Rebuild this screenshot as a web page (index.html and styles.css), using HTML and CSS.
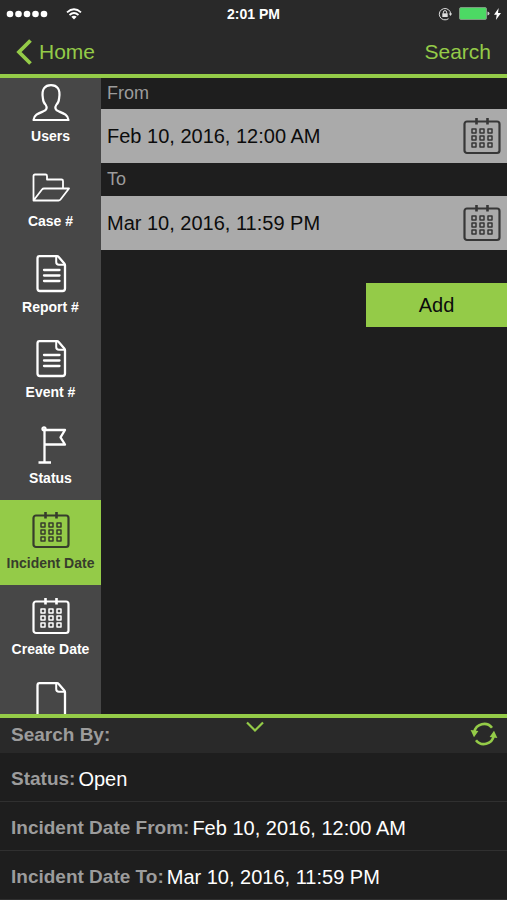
FILE: index.html
```html
<!DOCTYPE html>
<html lang="en">
<head>
<meta charset="utf-8">
<meta name="viewport" content="width=device-width, initial-scale=1">
<title>Search</title>
<link rel="stylesheet" href="styles.css">
</head>
<body>
<svg class="sprite" aria-hidden="true">
  <symbol id="calendar" viewBox="0 0 38 38">
    <rect x="1.500" y="4.500" width="35" height="31.500" rx="2.500" stroke-width="2.200"/>
    <path d="M13.500 1v6.500M24.500 1v6.500" stroke-width="2.600"/>
    <path d="M9 12h4v4h-4zM17 12h4v4h-4zM25 12h4v4h-4zM9 19h4v4h-4zM17 19h4v4h-4zM25 19h4v4h-4zM9 26h4v4h-4zM17 26h4v4h-4zM25 26h4v4h-4z" stroke-width="1.500"/>
  </symbol>
  <symbol id="page" viewBox="0 0 38 38">
    <path d="M7.500 1.200h17.500q1 0 1.700.8l5.600 6.500q.7.800.7 1.800v23.200q0 2.500-2.500 2.500h-22.500q-2.500 0-2.500-2.500v-30q0-2.300 2-2.300z" stroke-width="2.300"/>
    <path d="M24.200 1.500v5.500q0 2.800 2.800 2.800h5.500" stroke-width="2"/>
  </symbol>
  <symbol id="document" viewBox="0 0 38 38">
    <use href="#page"/>
    <path d="M12 15h15.500M12 20.500h15.500M12 26h15.500" stroke-width="2.300" stroke-linecap="round"/>
  </symbol>
</svg>

<header class="top">
  <div class="status">
    <div class="status-left">
      <svg width="42" height="8" viewBox="0 0 42 8" fill="#fff" aria-hidden="true"><circle cx="4" cy="4" r="3.300"/><circle cx="12.500" cy="4" r="3.300"/><circle cx="21" cy="4" r="3.300"/><circle cx="29.500" cy="4" r="3.300"/><circle cx="38" cy="4" r="3.300"/></svg>
      <svg width="16" height="12" viewBox="0 0 16 12" fill="none" stroke="#fff" stroke-width="1.800" aria-hidden="true"><path d="M1 4.300q7-6.200 14 0M3.500 7q4.500-4 9 0"/><path d="M8 11.500L5.300 8.800q2.700-2 5.400 0z" fill="#fff" stroke="none"/></svg>
    </div>
    <div class="time">2:01 PM</div>
    <div class="status-right">
      <svg width="14" height="14" viewBox="0 0 14 14" fill="none" stroke="#ddd" aria-hidden="true"><path d="M10.500 11.700A5.700 5.700 0 1 1 12.700 7"/><path d="M10.800 6.500h3.400l-1.700 2.500z" fill="#ddd" stroke="none"/><path d="M4.300 6.300h5.400v3.700h-5.400z" fill="#ddd" stroke="none"/><path d="M5.400 6.500v-1.300a1.600 1.600 0 0 1 3.200 0v1.300"/></svg>
      <svg class="battery" width="31" height="13" viewBox="0 0 31 13" aria-hidden="true"><rect x="0.500" y="0.500" width="27" height="12" rx="1.500" fill="#4cd964" stroke="#7d9a80"/><path d="M28.500 4.500q2 .5 2 2t-2 2z" fill="#ccc"/></svg>
      <svg width="7" height="12" viewBox="0 0 7 12" fill="#fff" aria-hidden="true"><path d="M4.700 0L0 6.700h2.700L1.900 12 7 5H4z"/></svg>
    </div>
  </div>
  <nav class="nav">
    <a class="back" href="#home">
      <svg width="16" height="26" viewBox="0 0 16 26" fill="none" stroke="currentColor" stroke-width="3.800" aria-hidden="true"><path d="M14.500 1.500L3 13l11.500 11.500"/></svg>
      Home
    </a>
    <a href="#search">Search</a>
  </nav>
</header>

<main class="main">
  <nav class="side" aria-label="Search criteria">
    <button class="item" type="button">
      <svg class="icon" viewBox="0 0 38 38" stroke-width="2.200" aria-hidden="true"><path d="M1.500 36C2 31 6 29.500 11 27.500C15 26 15.500 23.500 13.500 20.500C11 18.500 11 15.500 10.800 13.500C9.500 5 13 1.200 19 1.200S28.500 5 27.200 13.500C27 15.500 27 18.500 24.500 20.500C22.500 23.500 23 26 27 27.500C32 29.500 36 31 36.500 36z"/></svg>
      <span>Users</span>
    </button>
    <button class="item" type="button">
      <svg class="icon" viewBox="0 0 38 38" stroke-width="1.800" aria-hidden="true"><path d="M1.500 31.500V7q0-1.500 1.500-1.500h10.500q1.500 0 1.500 1.500v3.500h14.500q1.500 0 1.500 1.500v7M1.500 31.500L10 20.500q.8-1 2-1h25L28.500 30.500q-.8 1-2 1z"/></svg>
      <span>Case #</span>
    </button>
    <button class="item" type="button">
      <svg class="icon" aria-hidden="true"><use href="#document"/></svg>
      <span>Report #</span>
    </button>
    <button class="item" type="button">
      <svg class="icon" aria-hidden="true"><use href="#document"/></svg>
      <span>Event #</span>
    </button>
    <button class="item" type="button">
      <svg class="icon" viewBox="0 0 38 38" stroke-width="2.300" aria-hidden="true"><path d="M12.500 3v33.500M6.500 36.500h12.500M12.500 4h20.500l-4.500 7.300 4.500 7.200H12.500"/><circle cx="12" cy="2.800" r="1.500"/></svg>
      <span>Status</span>
    </button>
    <button class="item selected" type="button" aria-current="true">
      <svg class="icon" aria-hidden="true"><use href="#calendar"/></svg>
      <span>Incident Date</span>
    </button>
    <button class="item" type="button">
      <svg class="icon" aria-hidden="true"><use href="#calendar"/></svg>
      <span>Create Date</span>
    </button>
    <button class="item" type="button" aria-label="More">
      <svg class="icon" aria-hidden="true"><use href="#page"/></svg>
      <span></span>
    </button>
  </nav>

  <form class="form">
    <label class="caption" for="from">From</label>
    <div class="field">
      <input id="from" type="text" value="Feb 10, 2016, 12:00 AM">
      <button class="pick" type="button" aria-label="Pick from date"><svg class="icon" aria-hidden="true"><use href="#calendar"/></svg></button>
    </div>
    <label class="caption" for="to">To</label>
    <div class="field">
      <input id="to" type="text" value="Mar 10, 2016, 11:59 PM">
      <button class="pick" type="button" aria-label="Pick to date"><svg class="icon" aria-hidden="true"><use href="#calendar"/></svg></button>
    </div>
    <button class="add" type="button">Add</button>
  </form>
</main>

<section class="summary">
  <div class="summary-head">
    <h2>Search By:</h2>
    <button class="collapse" type="button" aria-label="Collapse"><svg width="18" height="12" viewBox="0 0 18 12" fill="none" stroke="currentColor" stroke-width="2.200" aria-hidden="true"><path d="M1 1.500l8 8 8-8"/></svg></button>
    <button class="refresh" type="button" aria-label="Reset"><svg width="28" height="24" viewBox="0 0 28 24" fill="none" stroke="currentColor" stroke-width="2.600" aria-hidden="true"><path d="M4.300 10A10 10 0 0 1 22 5.800M23.700 14A10 10 0 0 1 6 18.200"/><path d="M.6 8l7.800 1-4.400 6.200zM27.400 16l-7.800-1 4.400-6.200z" fill="currentColor" stroke="none"/></svg></button>
  </div>
  <dl class="rows">
    <div class="row"><dt>Status:</dt><dd>Open</dd></div>
    <div class="row"><dt>Incident Date From:</dt><dd>Feb 10, 2016, 12:00 AM</dd></div>
    <div class="row"><dt>Incident Date To:</dt><dd>Mar 10, 2016, 11:59 PM</dd></div>
  </dl>
</section>
</body>
</html>
```
FILE: styles.css
```css
* {
  box-sizing: border-box;
}

body {
  margin: 0;
  height: 100vh;
  display: flex;
  flex-direction: column;
  background: #1e1e1e;
  color: #fff;
  font-family: "Liberation Sans", Arial, sans-serif;
  font-size: 20px;
}

button,
input {
  margin: 0;
  padding: 0;
  border: 0;
  border-radius: 0;
  background: none;
  color: inherit;
  font: inherit;
}

svg {
  display: block;
  flex: none;
}

.sprite {
  position: absolute;
  width: 0;
  height: 0;
}

.icon {
  width: 38px;
  height: 38px;
  fill: none;
  stroke: currentColor;
  stroke-linejoin: round;
}

.top {
  background: #292929;
  border-bottom: 4px solid #94cb48;
}

.status {
  display: grid;
  grid-template-columns: 1fr auto 1fr;
  align-items: center;
  height: 27px;
  padding: 0 6px;
}

.status-left,
.status-right {
  display: flex;
  align-items: center;
}

.status-left {
  gap: 18px;
}

.status-right {
  justify-content: flex-end;
  gap: 4px;
}

.battery {
  margin-left: 3px;
}

.time {
  font-size: 14px;
  font-weight: bold;
}

.nav {
  display: flex;
  justify-content: space-between;
  align-items: center;
  height: 47px;
  padding: 3px 16px 0;
  font-size: 21px;
}

.nav a {
  color: #94cb48;
  text-decoration: none;
}

.nav .back {
  display: flex;
  align-items: center;
  gap: 7px;
}

.main {
  flex: 1;
  min-height: 0;
  display: flex;
}

.side {
  flex: none;
  width: 101px;
  overflow: hidden;
  display: flex;
  flex-direction: column;
  background: #474747;
}

.item {
  flex: none;
  height: 85px;
  padding-bottom: 13px;
  display: flex;
  flex-direction: column;
  align-items: center;
  justify-content: flex-end;
  gap: 5px;
  font-size: 14px;
  font-weight: bold;
  line-height: 18px;
  white-space: nowrap;
}

.item:nth-child(odd) {
  height: 86px;
}

.item:first-child {
  height: 80px;
}

.item span {
  min-height: 18px;
}

.selected {
  background: #94cb48;
  color: #373d2c;
}

.form {
  flex: 1;
  min-width: 0;
  display: flex;
  flex-direction: column;
}

.caption {
  height: 33px;
  padding-left: 6px;
  color: #9c9c9c;
  font-size: 18px;
  line-height: 32px;
}

.caption:first-child {
  height: 31px;
  line-height: 30px;
}

.field {
  display: flex;
  align-items: center;
  height: 54px;
  padding: 0 6px;
  background: #aaa;
  color: #0c0c0c;
}

.field input {
  flex: 1;
  min-width: 0;
}

.pick {
  color: #373737;
}

.add {
  align-self: flex-end;
  width: 141px;
  height: 44px;
  margin-top: 33px;
  background: #94cb48;
  color: #0c0c0c;
}

.summary {
  border-top: 4px solid #94cb48;
}

.summary-head {
  display: grid;
  grid-template-columns: 1fr auto 1fr;
  height: 35px;
  padding: 0 9px 0 11px;
  background: #292929;
  color: #94cb48;
}

.summary-head h2 {
  margin: 0;
  color: #9c9c9c;
  font-size: 19px;
  line-height: 33px;
}

.collapse {
  align-self: start;
  padding-top: 3px;
}

.refresh {
  justify-self: end;
  align-self: start;
  padding-top: 4px;
}

.rows {
  margin: 0;
}

.row {
  display: flex;
  align-items: center;
  gap: 3px;
  height: 49px;
  padding: 4px 11px 0;
  border-bottom: 1px solid #303030;
}

.row dt {
  color: #9c9c9c;
  font-size: 19px;
  font-weight: bold;
}

.row dd {
  margin: 0;
}
```
